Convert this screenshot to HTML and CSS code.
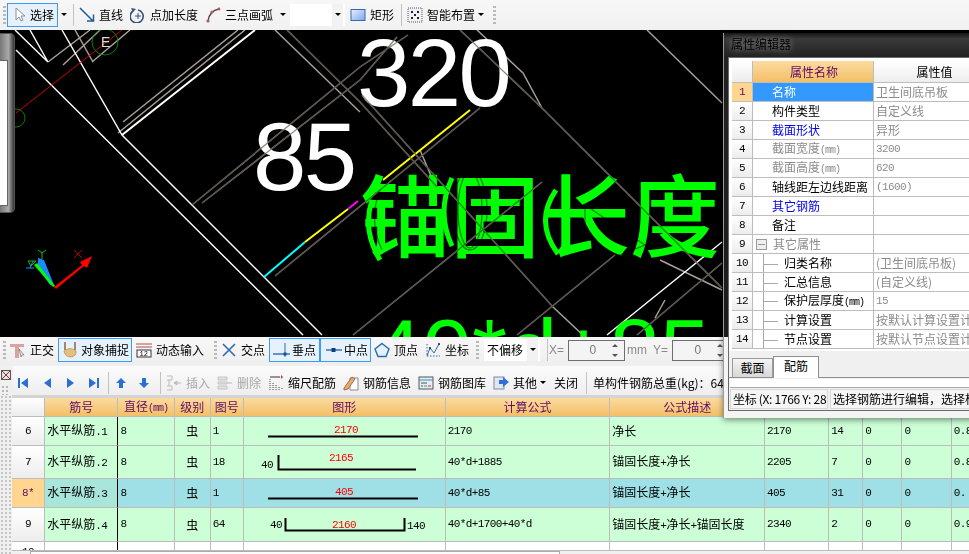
FILE: index.html
```html
<!DOCTYPE html>
<html lang="zh">
<head>
<meta charset="utf-8">
<title>属性编辑器</title>
<link rel="stylesheet" href="styles.css">
</head>
<body>
<div class="app">

<div class="tb tb1">
  <span class="grip m3"></span>
  <div class="btn on sel m1"><svg class="ic" viewBox="0 0 16 16"><path d="M3 1v12l3-3 2 4 2-1-2-4h4z" fill="#fff" stroke="#8a8f96"/></svg><span class="sel-t">选择</span></div>
  <span class="arr m2"></span>
  <span class="sep m6"></span>
  <div class="tool m5"><svg class="ic" viewBox="0 0 16 16"><path d="M1 1l13 13M8 14h6.5V7.5" fill="none" stroke="#1f5d96" stroke-width="1.5"/></svg><span>直线</span></div>
  <div class="tool m7 g4"><svg class="ic" viewBox="0 0 16 16"><path d="M3 4a6.5 6.5 0 1 0 5-1" fill="none" stroke="#33507a" stroke-width="1.6"/><path d="M8 6v6M5 9h6" stroke="#33507a"/><path d="M1 1l5 1-3 3z" fill="#33507a"/></svg><span>点加长度</span></div>
  <div class="tool m7"><svg class="ic" viewBox="0 0 16 16"><path d="M3 14C4 7 8 3 14 2" fill="none" stroke="#3c4a5a" stroke-width="1.4"/><circle cx="3" cy="14" r="1.6" fill="#d0504a"/><circle cx="7" cy="5" r="1.6" fill="#d0504a"/><circle cx="14" cy="2" r="1.4" fill="#d0504a"/></svg><span>三点画弧</span></div>
  <span class="arr m6"></span>
  <div class="combo w55 m4"><span></span><span class="arr"></span></div>
  <div class="tool m5"><svg class="ic" viewBox="0 0 16 16"><defs><linearGradient id="rg" x1="0" y1="0" x2="1" y2="1"><stop offset="0" stop-color="#e8f0ff"/><stop offset="1" stop-color="#7ea6e8"/></linearGradient></defs><rect x="1" y="2.5" width="14" height="11" fill="url(#rg)" stroke="#3a66b0"/></svg><span>矩形</span></div>
  <span class="sep m7"></span>
  <div class="tool m5"><svg class="ic" viewBox="0 0 16 16"><rect x="1" y="1" width="14" height="14" fill="#eef2f4" stroke="#555" stroke-dasharray="1 1"/><path d="M4 4h2v2H4zM10 4h2v2h-2zM7 7h2v2H7zM4 10h2v2H4zM10 10h2v2h-2z" fill="#223"/></svg><span>智能布置</span></div>
  <span class="arr m2"></span>
  <span class="end m4"></span>
  <span class="grip m5"></span>
</div>

<div class="canvas">
<svg class="cad" viewBox="0 30 969 307" width="969" height="307">
  <g class="gray">
    <path d="M48 62L90 30M63 65L100 30M92 62L130 30M75 30L93 62M118 133L245 30M123 122L238 30M192 205L360 67L408 35M202 203L360 80L397 37M275 276L480 108M275 30L360 112M287 30L360 102L437 187M362 95L553 307L585 337M460 30L542 108L722 288M477 30L523 73L542 108M647 30L722 103M353 335L542 182M517 335L615 255M637 335L722 263M420 150L437 190M660 260L722 290M655 318L665 300"/>
  </g>
  <g class="white">
    <path d="M15 30L48 62L30 30M62 30L122 135L322 335M16 50L303 335"/>
    <path class="thick" d="M122 135L255 30"/>
    <path d="M607 335L722 242"/>
  </g>
  <path class="red" d="M16 113L122 30"/>
  <circle class="ring" cx="105" cy="42" r="13"/>
  <circle class="ring" cx="16" cy="118" r="9"/>
  <text class="e" x="101" y="47">E</text>
  <path class="c-cyan" d="M264 277L305 242"/>
  <path class="c-yellow" d="M305 242L348 209M383 180L470 110"/>
  <path class="c-mag" d="M348 209L358 201"/>
  <text class="big" x="357" y="106">320</text>
  <text class="big" x="253" y="190">85</text>
  <text class="hz" x="360" y="250">锚固长度</text>
  <text class="formula" x="372" y="383">40*d+85</text>
  <path class="arc" d="M372 200q-10 30 8 60M452 178q-16 34 0 68M556 190q-22 32 2 64"/>
  <g class="over">
    <path d="M192 205L360 67L408 35M202 203L360 80L397 37M275 276L480 108M287 30L360 102L437 187M362 95L553 307M460 30L542 108L722 288M353 335L542 182M517 335L615 255M637 335L722 263"/>
    <ellipse cx="470" cy="210" rx="17" ry="40"/>
    <ellipse cx="470" cy="210" rx="12" ry="38"/>
    <path d="M380 190q-12 30 2 60M585 205l60 40-30 12-30-20z"/>
  </g>
  <g class="axis">
    <path class="ax-red" d="M54 287L82 265L80 262L92 256L87 268L84 266L56 289z"/>
    <path class="ax-blue" d="M38 258L44 260L54 285L50 285L38 268z"/>
    <path class="ax-green" d="M34 265L37 263L55 286L53 287z"/>
    <path class="ax-thin-g" d="M42 259V253M42 253L38 250M42 253L46 250M28 261H36L31 266z"/>
    <path class="ax-thin-b" d="M26 268H34M30 268L33 261"/>
    <path class="ax-thin-r" d="M74 250L82 258M82 250L74 258"/>
  </g>
</svg>
<div class="side"><div class="side-in"></div></div>
</div>

<div class="tb tb2">
  <span class="grip m3"></span>
  <div class="tool m4"><svg class="ic" viewBox="0 0 16 16"><path d="M0 2h14v3H9v11H5V5H0z" fill="#d9a3a0"/><path d="M9 7l5 6-2 0-1 2z" fill="#dfe4ea" stroke="#777" stroke-width=".7"/></svg><span>正交</span></div>
  <div class="btn on snap m4"><svg class="ic" viewBox="0 0 16 16"><path d="M3 0v8M13 0v8" stroke="#8a5a3a" stroke-width="1.4"/><path d="M2 9q6-5 12 0q1 5-5 6q-6 0-7-6z" fill="#e3c17c" stroke="#a58440" stroke-width=".6"/></svg><span>对象捕捉</span></div>
  <div class="tool m4"><svg class="ic" viewBox="0 0 16 16"><path d="M0 2h16M0 5h16" stroke="#b0504a"/><rect x="1" y="8" width="14" height="7" fill="#fff" stroke="#333"/><text class="t12" x="3.5" y="14">12</text></svg><span>动态输入</span></div>
  <span class="end m5"></span>
  <span class="grip m5"></span>
  <div class="tool m4"><svg class="ic" viewBox="0 0 16 16"><path d="M2 2l12 12M14 2L2 14" stroke="#2a6cb0" stroke-width="1.6"/></svg><span>交点</span></div>
  <div class="btn on pt1 m4"><svg class="ic w20" viewBox="0 0 20 16"><path d="M1 12H18" stroke="#2a6cb0" stroke-width="1.4"/><path d="M13 1V15" stroke="#2a6cb0"/><rect x="11.500" y="10.500" width="3" height="3" fill="#1f4f90"/></svg><span>垂点</span></div>
  <div class="btn on pt2"><svg class="ic w20" viewBox="0 0 20 16"><path d="M2 8H18" stroke="#2a6cb0" stroke-width="1.4"/><rect x="7.500" y="6" width="4" height="4" fill="#123c80"/></svg><span>中点</span></div>
  <div class="tool m3"><svg class="ic" viewBox="0 0 16 16"><path d="M8 1.500L15 7l-3 7.500H4L1 7z" fill="#e4f0fb" stroke="#2a6cb0" stroke-width="1.4"/></svg><span>顶点</span></div>
  <div class="tool m7"><svg class="ic" viewBox="0 0 16 16"><path d="M2 14L5 6l4 5 5-9" fill="none" stroke="#2a6cb0"/><path d="M2 2v12h13" fill="none" stroke="#2a6cb0" stroke-dasharray="1.500 1.500"/><circle cx="5" cy="6" r="1" fill="#123"/><circle cx="14" cy="2" r="1" fill="#123"/></svg><span>坐标</span></div>
  <span class="end m4"></span>
  <span class="grip m3"></span>
  <div class="combo w56 m5"><span class="combo-t">不偏移</span><span class="arr"></span></div>
  <span class="sep m7"></span>
  <span class="lbl m1">X=</span>
  <div class="spin w57 m4"><span>0</span><i class="spin-b"><b class="up"></b><b class="dn"></b></i></div>
  <span class="lbl m2">mm</span>
  <span class="lbl m5">Y=</span>
  <div class="spin w58 m4"><span>0</span><i class="spin-b"><b class="up"></b><b class="dn"></b></i></div>
</div>

<div class="tb tb3">
  <div class="corner">
    <svg class="closer" width="10" height="10" viewBox="0 0 10 10"><rect x=".5" y=".5" width="9" height="9" fill="#e9dfe0" stroke="#555"/><path d="M1 1l8 8M9 1L1 9" stroke="#8a3a3a"/></svg>
    <span class="dots"></span>
  </div>
  <div class="pill">
    <svg class="ic m2" viewBox="0 0 16 16"><path d="M3 3h2v10H3zM13 3v10L6 8z" fill="#2b6fd0"/></svg>
    <svg class="ic m8" viewBox="0 0 16 16"><path d="M12 3v10L5 8z" fill="#2b6fd0"/></svg>
    <svg class="ic m7" viewBox="0 0 16 16"><path d="M5 3v10l7-5z" fill="#2b6fd0"/></svg>
    <svg class="ic m8" viewBox="0 0 16 16"><path d="M11 3h2v10h-2zM3 3v10l7-5z" fill="#2b6fd0"/></svg>
    <span class="sep m6"></span>
    <svg class="ic m4" viewBox="0 0 16 16"><path d="M8 3l5 5h-3v5H6V8H3z" fill="#2b6fd0"/></svg>
    <svg class="ic m7" viewBox="0 0 16 16"><path d="M8 13l5-5h-3V3H6v5H3z" fill="#2b6fd0"/></svg>
    <span class="sep m8"></span>
    <div class="tool m5 off"><svg class="ic" viewBox="0 0 16 16"><path d="M1 1h5v4H1M1 11h5v4H1M3 5v6" fill="none" stroke="#bbb"/><path d="M8 8h7M8 8l3-2v4z" stroke="#bbb" fill="#ccc"/></svg><span>插入</span></div>
    <div class="tool m7 off"><svg class="ic" viewBox="0 0 16 16"><path d="M1 2h9v3H1zM1 11h9v3H1zM1 7h9v2H1z" fill="#e2e2e2" stroke="#c4c4c4"/><path d="M10 8h5" stroke="#bbb"/></svg><span>删除</span></div>
    <div class="tool m7"><svg class="ic" viewBox="0 0 16 16"><path d="M2 4v11M5 8v7M8 10v5M11 12v3M14 13v2" stroke="#444" stroke-dasharray="1 1"/><path d="M2 2h10" stroke="#333"/><path d="M13 0l2 2-2 2z" fill="#c33"/></svg><span>缩尺配筋</span></div>
    <div class="tool m7"><svg class="ic" viewBox="0 0 16 16"><path d="M7 3h8v12H7z" fill="#fff" stroke="#888"/><path d="M1 13L9 2l3 2-7 10-4 1z" fill="#e0b060" stroke="#a66"/></svg><span>钢筋信息</span></div>
    <div class="tool m7"><svg class="ic" viewBox="0 0 16 16"><rect x="1" y="2" width="14" height="12" fill="#e4ecf6" stroke="#556"/><path d="M1 5h14" stroke="#39a"/><path d="M3 8h6M3 11h2" stroke="#555"/><path d="M6 11h3" stroke="#3a3"/><path d="M10 11h3" stroke="#c33"/></svg><span>钢筋图库</span></div>
    <div class="tool m7"><svg class="ic" viewBox="0 0 16 16"><rect x="1" y="2" width="10" height="12" fill="#dfe7f0" stroke="#889"/><path d="M6 5h4V2l6 5-6 5V9H6z" fill="#3070d8"/></svg><span>其他</span></div>
    <span class="arr m2"></span>
    <span class="txt m8">关闭</span>
    <span class="sep m8"></span>
    <span class="txt m6 nowrap">单构件钢筋总重(kg)：64</span>
  </div>
</div>

<div class="grid-area">
  <div class="strip"></div>
  <div class="sheet-wrap">
    <div class="sheet-clip">
    <table class="sheet">
      <colgroup><col class="c33"><col class="c73"><col class="c56"><col class="c36"><col class="c33"><col class="c201"><col class="c164"><col class="c154"><col class="c64"><col class="c34"><col class="c39"><col class="c49"><col class="c60"></colgroup>
      <thead>
        <tr class="h19"><th class="rh"></th><th>筋号</th><th>直径<small>(mm)</small></th><th>级别</th><th>图号</th><th>图形</th><th>计算公式</th><th>公式描述</th><th>长度</th><th>根数</th><th>搭接</th><th>损耗</th><th>单重</th></tr>
      </thead>
      <tbody>
        <tr class="r29">
          <td class="rh num">6</td><td class="frozen">水平纵筋<span class="num">.1</span></td><td class="num">8</td><td class="ctr">虫</td><td class="num">1</td>
          <td class="shape"><svg width="200" height="28" viewBox="0 0 200 28"><path d="M24 19.500H174" class="bar"/><text class="dim" x="102" y="16">2170</text></svg></td>
          <td class="num">2170</td><td>净长</td><td class="num">2170</td><td class="num">14</td><td class="num">0</td><td class="num">0</td><td class="num">0.8</td>
        </tr>
        <tr class="r33">
          <td class="rh num">7</td><td class="frozen">水平纵筋<span class="num">.2</span></td><td class="num">8</td><td class="ctr">虫</td><td class="num">18</td>
          <td class="shape"><svg width="200" height="32" viewBox="0 0 200 32"><path d="M34.500 9V23.500H172" class="bar"/><text class="dim" x="97" y="15">2165</text><text class="dimk" x="17" y="22">40</text></svg></td>
          <td class="num">40*d+1885</td><td>锚固长度<span class="num">+</span>净长</td><td class="num">2205</td><td class="num">7</td><td class="num">0</td><td class="num">0</td><td class="num">0.8</td>
        </tr>
        <tr class="r29 cur">
          <td class="rh num">8*</td><td class="frozen">水平纵筋<span class="num">.3</span></td><td class="num">8</td><td class="ctr">虫</td><td class="num">1</td>
          <td class="shape"><svg width="200" height="28" viewBox="0 0 200 28"><path d="M24 19.500H174" class="bar"/><text class="dim" x="100" y="16">405</text></svg></td>
          <td class="num">40*d+85</td><td>锚固长度<span class="num">+</span>净长</td><td class="num">405</td><td class="num">31</td><td class="num">0</td><td class="num">0</td><td class="num">0.</td>
        </tr>
        <tr class="r34">
          <td class="rh num">9</td><td class="frozen">水平纵筋<span class="num">.4</span></td><td class="num">8</td><td class="ctr">虫</td><td class="num">64</td>
          <td class="shape"><svg width="200" height="33" viewBox="0 0 200 33"><path d="M41.500 10V22.500H160.500V10" class="bar"/><text class="dim" x="100" y="20">2160</text><text class="dimk" x="26" y="20">40</text><text class="dimk" x="163" y="21">140</text></svg></td>
          <td class="num">40*d+1700+40*d</td><td>锚固长度<span class="num">+</span>净长<span class="num">+</span>锚固长度</td><td class="num">2340</td><td class="num">2</td><td class="num">0</td><td class="num">0</td><td class="num">0.9</td>
        </tr>
        <tr class="r20 blank">
          <td class="rh num">10</td><td class="frozen"></td><td></td><td></td><td></td><td></td><td></td><td></td><td></td><td></td><td></td><td></td><td></td>
        </tr>
      </tbody>
    </table>
    </div>
    <div class="hscroll"><span class="thumb"></span></div>
  </div>
</div>

<div class="win">
  <div class="win-title">属性编辑器</div>
  <div class="win-in">
    <div class="pg-wrap">
      <table class="pg">
        <colgroup><col class="p21"><col class="p121"><col class="p120"></colgroup>
        <thead><tr class="ph"><th class="prh"></th><th class="act">属性名称</th><th class="plain">属性值</th></tr></thead>
        <tbody>
          <tr><td class="prh selh num">1</td><td class="chosen">名称</td><td class="v">卫生间底吊板</td></tr>
          <tr><td class="prh num">2</td><td class="k">构件类型</td><td class="v">自定义线</td></tr>
          <tr><td class="prh num">3</td><td class="k link">截面形状</td><td class="v">异形</td></tr>
          <tr><td class="prh num">4</td><td class="k mute">截面宽度<small>(mm)</small></td><td class="v num">3200</td></tr>
          <tr><td class="prh num">5</td><td class="k mute">截面高度<small>(mm)</small></td><td class="v num">620</td></tr>
          <tr><td class="prh num">6</td><td class="k">轴线距左边线距离</td><td class="v num">(1600)</td></tr>
          <tr><td class="prh num">7</td><td class="k link">其它钢筋</td><td class="v"></td></tr>
          <tr><td class="prh num">8</td><td class="k">备注</td><td class="v"></td></tr>
          <tr><td class="prh num">9</td><td class="k mute tree-root"><span class="minus"></span>其它属性</td><td class="v"></td></tr>
          <tr><td class="prh num">10</td><td class="tree"><span class="tick"></span>归类名称</td><td class="v">(卫生间底吊板)</td></tr>
          <tr><td class="prh num">11</td><td class="tree"><span class="tick"></span>汇总信息</td><td class="v">(自定义线)</td></tr>
          <tr><td class="prh num">12</td><td class="tree"><span class="tick"></span>保护层厚度<small>(mm)</small></td><td class="v num">15</td></tr>
          <tr><td class="prh num">13</td><td class="tree"><span class="tick"></span>计算设置</td><td class="v">按默认计算设置计算</td></tr>
          <tr><td class="prh num">14</td><td class="tree"><span class="tick"></span>节点设置</td><td class="v">按默认节点设置计算</td></tr>
        </tbody>
      </table>
    </div>
    <div class="tabs"><span class="tab">截面</span><span class="tab act-tab">配筋</span></div>
    <div class="tab-strip"></div>
    <div class="status">
      <span class="st st1"><span>坐标 (X: 1766 Y: 28</span></span>
      <span class="st st2">选择钢筋进行编辑，选择构件</span>
    </div>
  </div>
</div>

</div>
</body>
</html>
```

FILE: styles.css
```css
* { box-sizing: border-box; }
html, body { margin: 0; padding: 0; }
body { background: #f0f0f0; }

.app {
  position: relative;
  width: 969px;
  height: 554px;
  overflow: hidden;
  display: flex;
  flex-direction: column;
  font: 12px/1 "Noto Sans CJK SC", "Liberation Sans", sans-serif;
  color: #000;
}

/* spacing steps */
.m1 { margin-left: 1px; } .m2 { margin-left: 2px; } .m3 { margin-left: 3px; }
.m4 { margin-left: 4px; } .m5 { margin-left: 5px; } .m6 { margin-left: 6px; }
.m7 { margin-left: 7px; } .m8 { margin-left: 8px; }

/* toolbars */
.tb { display: flex; align-items: center; flex: none; white-space: nowrap; }
.tb1 { height: 30px; background: linear-gradient(#f7f7f7, #f1f1f1); }
.tb2 { height: 28px; padding-bottom: 2px; background: linear-gradient(#f8f8f8, #eeeeee); }
.tb3 { height: 30px; background: #f0f0f0; align-items: stretch; }

.grip {
  width: 3px; height: 18px; flex: none;
  background: repeating-linear-gradient(#b9b9b9 0 2px, transparent 2px 4px);
}
.sep { width: 1px; height: 22px; background: #c2c2c2; flex: none; }
.end { width: 0; flex: none; }
.arr { width: 7px; height: 4px; flex: none; position: relative; }
.arr::before {
  content: ""; display: block; width: 0; height: 0; margin: 0 auto;
  border: 3px solid transparent; border-top: 3px solid #000; border-bottom: 0;
}

.ic { width: 16px; height: 16px; flex: none; display: block; }
.ic.w20 { width: 20px; }
.t12 { font: 7px "Liberation Mono", monospace; fill: #000; }
.tool { display: flex; align-items: center; gap: 4px; flex: none; }
.off { color: #a9a9a9; }
.txt { align-self: center; flex: none; }
.nowrap { white-space: nowrap; }

.btn { display: flex; align-items: center; border: 1px solid #3b9bf5; background: #e6f1fb; flex: none; }
.sel { width: 51px; height: 24px; padding-left: 5px; gap: 1px; }
.snap { width: 74px; height: 24px; padding-left: 3px; gap: 3px; }
.pt1 { width: 51px; height: 24px; padding-left: 2px; }
.pt2 { width: 51px; height: 24px; padding-left: 3px; }

.combo { display: flex; align-items: center; justify-content: space-between; height: 22px; background: #fff; padding-right: 2px; flex: none; }
.w55 { width: 55px; } .w56 { width: 56px; }
.combo-t { padding-left: 3px; }
.combo .arr { width: 11px; height: 100%; background: #f2f2f2; padding-top: 9px; }

.lbl { color: #8a8a8a; font-family: "Liberation Sans", sans-serif; flex: none; width: 15px; }
.lbl.m2 { width: 21px; }
.spin {
  display: flex; align-items: center; justify-content: flex-end; height: 21px; flex: none;
  border: 1px solid #6f6f6f; background: #f4f4f4; color: #777;
  font: 12px "Liberation Sans", sans-serif;
}
.w57 { width: 57px; } .w58 { width: 58px; }
.spin-b { width: 18px; height: 100%; display: flex; flex-direction: column; justify-content: center; align-items: center; gap: 7px; margin-left: 10px; }
.spin-b b { width: 0; height: 0; border: 3px solid transparent; border-top: 0; border-bottom: 3px solid #555; }
.spin-b .dn { border-bottom: 0; border-top: 3px solid #555; }

.corner { width: 13px; flex: none; display: flex; flex-direction: column; padding: 5px 0 0 1px; gap: 5px; }
.closer { display: block; flex: none; }
.dots {
  display: block; width: 9px; height: 10px;
  background-image: radial-gradient(#b5b5b5 1px, transparent 1px);
  background-size: 4px 4px;
}
.pill {
  flex: 1; display: flex; align-items: center; min-width: 0;
  background: linear-gradient(#fbfbfb, #eeeeee);
  margin-top: 1px;
  padding-top: 4px;
}

/* cad drawing */
.canvas { position: relative; height: 307px; flex: none; background: #000; overflow: hidden; }
.cad { display: block; }
.cad path, .cad circle, .cad ellipse { fill: none; }
.gray path { stroke: #a89e97; stroke-width: 1.5; }
.white path { stroke: #fff; stroke-width: 1.4; }
.white .thick { stroke-width: 2; }
.red { stroke: #ff0000; stroke-width: .8; }
.ring { stroke: #0a8a0a; stroke-width: .9; }
.e { fill: #ddd; font: 14px "Liberation Sans", sans-serif; }
.c-cyan { stroke: #00ffff; stroke-width: 2; }
.c-yellow { stroke: #ffff00; stroke-width: 2; }
.c-mag { stroke: #ff00ff; stroke-width: 2; }
.big { fill: #fff; font: 96px "Liberation Sans", sans-serif; letter-spacing: -2.700px; }
.hz { fill: #00ff00; font: 500 90px "Noto Sans CJK SC", sans-serif; }
.formula { fill: #00ff00; font: 90px "Liberation Sans", sans-serif; }
.cad .arc { stroke: #00ff00; stroke-width: 5; }
.over { mix-blend-mode: multiply; }
.over path, .over ellipse { stroke: #8a8a80; stroke-width: 1.3; }
.cad .ax-red { fill: #ff0000; }
.cad .ax-blue { fill: #1e88ff; }
.cad .ax-green { fill: #00ff00; }
.ax-thin-g { stroke: #00c800; stroke-width: 1; }
.ax-thin-b { stroke: #1e88ff; stroke-width: 1; }
.ax-thin-r { stroke: #e00000; stroke-width: .8; }
.side {
  position: absolute; left: 0; top: 3px; width: 15px; height: 180px;
  border-radius: 0 5px 5px 0; border: 1px solid #555; border-left: 0;
  background: linear-gradient(90deg, #777, #aaa 60%, #333);
  padding: 26px 6px 6px 0;
}
.side-in { height: 100%; background: #fff; border: 1px solid #666; border-left: 0; }

/* rebar sheet */
.grid-area { flex: 1; display: flex; min-height: 0; background: #f0f0f0; }
.strip {
  width: 12px; flex: none;
  background-image: radial-gradient(#c6c6c6 1px, transparent 1px);
  background-size: 4px 4px;
}
.sheet-wrap { flex: 1; min-width: 0; display: flex; flex-direction: column; }
.sheet-clip { height: 155px; overflow: hidden; border-top: 3px solid #d4d4d4; background: #fff; flex: none; }
.sheet { border-collapse: separate; border-spacing: 0; table-layout: fixed; width: 1000px; }
.sheet td, .sheet th { padding: 0 2px; border-right: 1px solid #bcbcbc; border-bottom: 1px solid #bcbcbc; white-space: nowrap; overflow: hidden; font-weight: 400; }
.sheet td { background: #ccffd6; }
.sheet th {
  background: linear-gradient(#fbdba0, #f3bf66);
  color: #5e0a66; text-align: center;
}
.sheet th.rh { background: linear-gradient(#fff, #ececec); }
.sheet td.rh { background: linear-gradient(#fff, #ededed); text-align: center; padding: 0; }
.c33 { width: 33px; } .c73 { width: 73px; } .c56 { width: 56px; } .c36 { width: 36px; }
.c201 { width: 201px; } .c164 { width: 164px; } .c154 { width: 154px; } .c64 { width: 64px; }
.c34 { width: 34px; } .c39 { width: 39px; } .c49 { width: 49px; } .c60 { width: 60px; }
.h19 th { height: 19px; } .r29 td { height: 29px; } .r33 td { height: 33px; } .r34 td { height: 34px; } .r20 td { height: 20px; }
.sheet .frozen { border-right-color: #000; }
.sheet .cur td { background: #9ee0e6; }
.sheet .cur td.rh { background: #ffd58f; color: #5e0a66; }
.sheet .cur td.frozen { background: #a8e6dc; }
.sheet .blank td { background: #fff; vertical-align: top; }
.sheet .blank td.rh { padding-top: 5px; }
.ctr { text-align: center; }
.sheet td.shape { padding: 0; }
.shape svg { display: block; }
.bar { fill: none; stroke: #000; stroke-width: 2; }
.dim { fill: #ff0000; font: 11px "Liberation Mono", monospace; text-anchor: middle; letter-spacing: -.6px; }
.dimk { fill: #000; font: 11px "Liberation Mono", monospace; letter-spacing: -.6px; }
.num { font-family: "Liberation Mono", monospace; font-size: 11px; letter-spacing: -.6px; }
small { font: 10px "Liberation Mono", monospace; letter-spacing: -1px; }
.hscroll { flex: 1; background: #f0f0f0; border-top: 1px solid #bbb; padding-left: 18px; }
.thumb { display: block; width: 530px; height: 100%; background: #fbfbfb; border: 1px solid #aaa; border-bottom: 0; }

/* floating property window */
.win {
  position: absolute; left: 723px; top: 33px; width: 262px; height: 385px;
  padding: 24px 0 7px 4px;
  background: linear-gradient(#151515, #3a3a3a 6px, #222 24px, #1b1b1b 304px, #f4f4f4 304px);
  box-shadow: 0 2px 6px rgba(0, 0, 0, .45);
  border-left: 1px solid #999;
}
.win-title { position: absolute; left: 7px; top: 5px; color: #000; font-size: 12px; text-shadow: 0 0 6px rgba(255,255,255,.55); }
.win-in {
  height: 100%; border: 1px solid #6a6a6a; background: #f0f0f0;
  display: flex; flex-direction: column; overflow: hidden;
}
.pg-wrap { height: 293px; flex: none; background: #fff; padding: 3px 0 0 3px; overflow: hidden; }
.pg { border-collapse: separate; border-spacing: 0; table-layout: fixed; width: 262px; }
.p21 { width: 21px; } .p121 { width: 121px; } .p120 { width: 120px; }
.pg th, .pg td { height: 19px; padding: 0 0 0 2px; border-right: 1px solid #bdbdbd; border-bottom: 1px solid #bdbdbd; font-weight: 400; white-space: nowrap; overflow: hidden; }
.pg .ph th { height: 22px; text-align: center; }
.pg .act { background: linear-gradient(#fbdba0, #f3bf66); color: #5e0a66; }
.pg .plain { background: linear-gradient(#fff, #ededed); }
.prh { background: linear-gradient(#fff, #ececec); text-align: center; }
.pg .prh { padding: 0; text-align: center; }
.pg .selh { background: #ffd58f; color: #5e0a66; }
.pg .chosen { background: #3399ff; color: #fff; padding-left: 19px; }
.pg .k { padding-left: 19px; }
.pg .link { color: #0000ee; }
.pg .mute { color: #8b8b8b; }
.pg .v { color: #8b8b8b; }
.pg .tree-root { padding-left: 3px; }
.minus {
  display: inline-block; width: 11px; height: 11px; border: 1px solid #9a9a9a; margin-right: 6px; vertical-align: -1px;
  background: linear-gradient(#999, #999) center / 7px 1px no-repeat, #eee;
}
.pg .tree { padding-left: 11px; background: linear-gradient(#a8a8a8, #a8a8a8) 10px 0 / 1px 100% no-repeat; }
.tick {
  display: inline-block; width: 14px; height: 1px; background: #a8a8a8;
  margin-right: 6px; vertical-align: middle;
}
.tabs { height: 27px; flex: none; display: flex; align-items: flex-end; padding-left: 3px; border-bottom: 1px solid #8f8f8f; }
.tab {
  width: 41px; height: 19px; display: flex; align-items: center; justify-content: center;
  border: 1px solid #9a9a9a; border-bottom: 0; background: linear-gradient(#f4f4f4, #d8d8d8);
}
.act-tab { width: 46px; height: 22px; background: #fff; margin-bottom: -1px; position: relative; border-color: #8f8f8f; align-items: flex-start; padding-top: 3px; }
.tab-strip { height: 9px; flex: none; background: #fff; border-bottom: 1px solid #aaa; margin: 1px 0 0 1px; }
.status { flex: 1; display: flex; gap: 2px; padding: 1px 0 1px 1px; min-height: 0; font-size: 12px; white-space: nowrap; }
.st { display: flex; align-items: center; background: #f5f5f5; border: 1px solid #d8d8d8; padding-left: 2px; overflow: hidden; flex: none; }
.st1 { width: 98px; }
.st1 span { font-family: "Noto Sans CJK SC", sans-serif; letter-spacing: -.3px; }
.st2 { flex: 1; }
```
